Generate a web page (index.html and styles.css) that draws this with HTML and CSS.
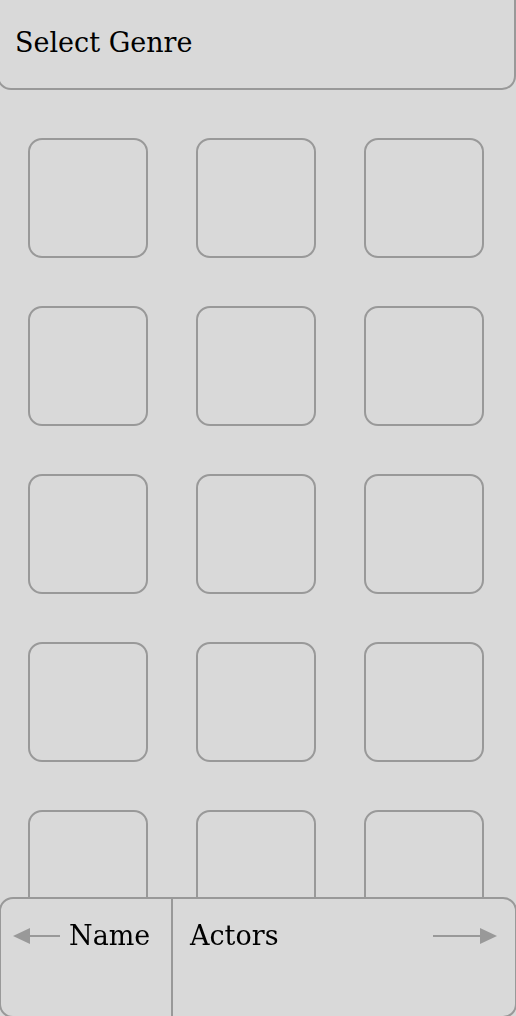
FILE: index.html
```html
<!DOCTYPE html>
<html>
<head>
<meta charset="utf-8">
<link rel="stylesheet" href="styles.css">
</head>
<body>
<header class="genre-bar">
  <span class="genre-label">Select Genre</span>
</header>
<main class="grid">
  <div class="tile"></div><div class="tile"></div><div class="tile"></div>
  <div class="tile"></div><div class="tile"></div><div class="tile"></div>
  <div class="tile"></div><div class="tile"></div><div class="tile"></div>
  <div class="tile"></div><div class="tile"></div><div class="tile"></div>
  <div class="tile"></div><div class="tile"></div><div class="tile"></div>
</main>
<footer class="tabs">
  <div class="tab tab-name">
    <svg class="arrow" width="48" height="18" viewBox="0 0 48 18"><line x1="14" y1="9" x2="47" y2="9" stroke="#999" stroke-width="2"/><polygon points="0,9 17,1 17,17" fill="#999"/></svg>
    <span class="tab-label">Name</span>
  </div>
  <div class="tab tab-actors">
    <span class="tab-label">Actors</span>
    <svg class="arrow" width="64" height="18" viewBox="0 0 64 18"><line x1="0" y1="9" x2="48" y2="9" stroke="#999" stroke-width="2"/><polygon points="64,9 47,1 47,17" fill="#999"/></svg>
  </div>
</footer>
</body>
</html>
```
FILE: styles.css
```css
* { box-sizing: border-box; }
html, body { margin: 0; padding: 0; }
body {
  background: #d9d9d9;
  font-family: "DejaVu Serif", "Liberation Serif", serif;
  color: #000;
  height: 1016px;
  overflow: hidden;
}
.genre-bar {
  margin: -14px 0 0 -3px;
  height: 104px;
  border: 2px solid #999;
  border-radius: 14px;
  display: flex;
  align-items: center;
  padding: 8px 0 0 16px;
}
.genre-label {
  font-size: 27px;
}
.grid {
  display: grid;
  grid-template-columns: repeat(3, 120px);
  column-gap: 48px;
  row-gap: 48px;
  padding: 48px 0 0 28px;
}
.tile {
  width: 120px;
  height: 120px;
  border: 2px solid #999;
  border-radius: 14px;
}
.tabs {
  position: fixed;
  left: -1px;
  right: -1px;
  top: 897px;
  height: 121px;
  border: 2px solid #999;
  border-radius: 14px;
  background: #d9d9d9;
  display: flex;
}
.tab {
  display: flex;
  align-items: flex-start;
  padding-top: 22px;
}
.tab-name {
  width: 172px;
  border-right: 2px solid #999;
  padding-left: 12px;
  gap: 8px;
}
.tab-actors {
  flex: 1;
  padding-left: 17px;
  padding-right: 18px;
  justify-content: space-between;
}
.tab-label {
  font-size: 27px;
  line-height: 30px;
}
.arrow { margin-top: 6px; }
```
